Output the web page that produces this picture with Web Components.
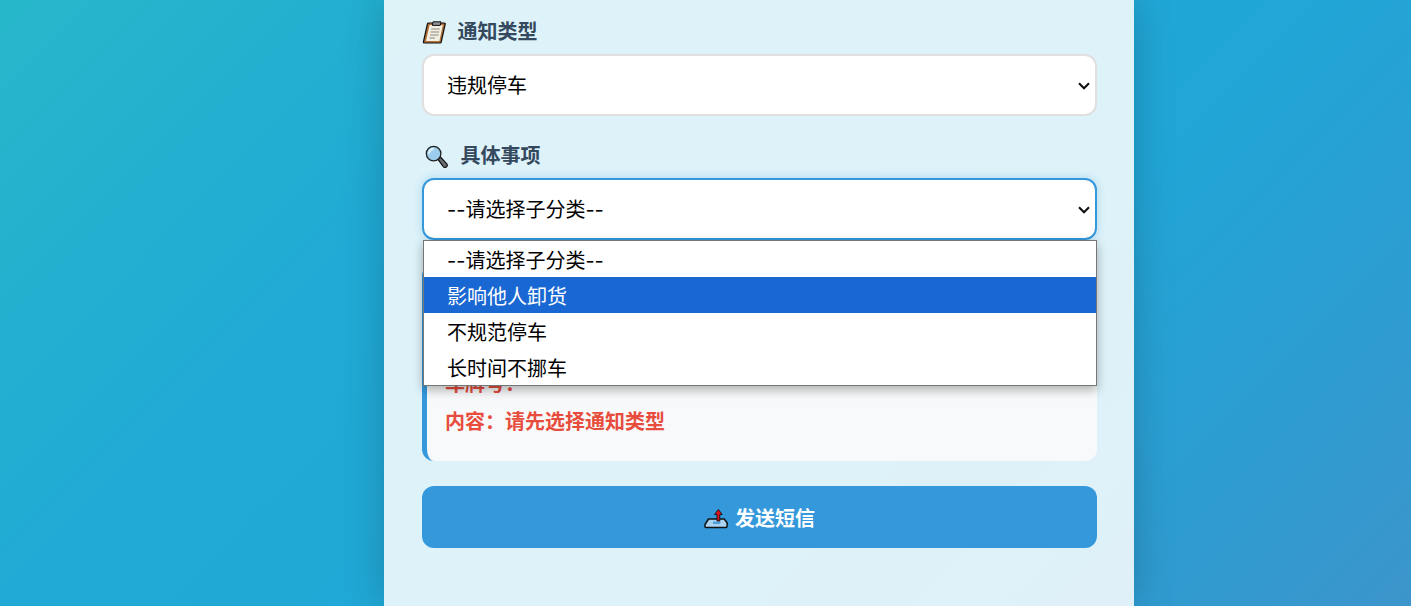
<!DOCTYPE html>
<html lang="zh-CN">
<head>
<meta charset="utf-8">
<title>短信通知</title>
<style>
  html, body { margin: 0; height: 606px; overflow: hidden; }
  body {
    background: linear-gradient(135deg, #27b7ca 0%, #20aad5 30%, #21a6d7 65%, #2e9cd1 85%, #3c95cb 100%);
    font-family: "Liberation Sans", "Noto Sans CJK SC", sans-serif;
  }
</style>
</head>
<body>
<notify-card>
  <form-field label="通知类型" gap="11.5">
    <svg slot="icon" width="24" height="24" viewBox="0 0 24 24">
      <path d="M6.4 3h16a.8.8 0 0 1 .8 1l-4 18.2a1 1 0 0 1-1 .8h-16a.8.8 0 0 1-.8-1l4-18.2a1 1 0 0 1 1-.8z" fill="#b06f38" stroke="#111" stroke-width="1.2" stroke-linejoin="round"/>
      <path d="M7.6 5h13.2L17.4 21H4z" fill="#f3efe2"/>
      <path d="M11 1.8h8l-.7 3.6h-8z" fill="#8d9094" stroke="#111" stroke-width="1"/>
      <path d="M9.2 9h8.6M8.6 12h8.6M8 15h8.6M7.4 18h5.6" stroke="#8a8a82" stroke-width="1.2"/>
    </svg>
    <select-box value="违规停车"></select-box>
  </form-field>
  <form-field label="具体事项" gap="12.5" open>
    <svg slot="icon" style="margin-left:2px" width="24" height="24" viewBox="0 0 24 24">
      <path d="M14 15.4l2.4-2.4 6.2 6.6a2.3 2.3 0 0 1-.1 3.2 2.3 2.3 0 0 1-3.2-.1z" fill="#6a6f74" stroke="#111" stroke-width="1.2" stroke-linejoin="round"/>
      <circle cx="9.6" cy="9.6" r="7.3" fill="#9ccdec" stroke="#222" stroke-width="1.3"/>
      <path d="M5 9a5 5 0 0 1 4-4" fill="none" stroke="#e3f3fc" stroke-width="1.8" stroke-linecap="round"/>
    </svg>
    <select-box value="--请选择子分类--" focused></select-box>
    <option-popup>
      <popup-row>--请选择子分类--</popup-row>
      <popup-row selected>影响他人卸货</popup-row>
      <popup-row>不规范停车</popup-row>
      <popup-row>长时间不挪车</popup-row>
    </option-popup>
  </form-field>
  <sms-preview>
    <p>车牌号&#xFF1A;</p>
    <p>内容&#xFF1A;请先选择通知类型</p>
  </sms-preview>
  <send-button>
    <svg slot="icon" width="24" height="24" viewBox="0 0 24 24">
      <path d="M4.5 14L1 19.5v2c0 .6.4 1 1 1h20c.6 0 1-.4 1-1l.2-3.5-3-4z" fill="#a9d3f0" stroke="#111" stroke-width="1.5" stroke-linejoin="round"/>
      <path d="M9 16.5h8l-1 2.5H9z" fill="#4f9fdb"/>
      <path d="M13 16V9.5h-2.4L14.4 4.4l3.8 5.1h-2.4V16z" fill="#e1141f" stroke="#111" stroke-width="0.9" stroke-linejoin="round"/>
    </svg>
    发送短信
  </send-button>
</notify-card>

<script>
class NotifyCard extends HTMLElement {
  constructor() {
    super();
    this.attachShadow({ mode: "open" }).innerHTML = `
      <style>
        :host {
          display: flex;
          flex-direction: column;
          box-sizing: border-box;
          width: 750px;
          height: 606px;
          margin-left: 384px;
          padding: 20px 37px 0 38px;
          background: rgba(255, 255, 255, 0.85);
          box-shadow: 0 0 40px rgba(0, 0, 0, 0.2);
        }
      </style>
      <slot></slot>`;
  }
}

class FormField extends HTMLElement {
  constructor() {
    super();
    this.attachShadow({ mode: "open" }).innerHTML = `
      <style>
        :host {
          display: block;
          position: relative;
          margin-bottom: 24px;
        }
        :host(:first-child) { margin-bottom: 28px; }
        label {
          display: flex;
          align-items: center;
          height: 24px;
          margin-bottom: 10px;
          font: bold 20px/24px "Liberation Sans", "Noto Sans CJK SC", sans-serif;
          color: #34495e;
        }
        ::slotted(svg) { flex: none; }
      </style>
      <label><slot name="icon"></slot><span></span></label>
      <slot></slot>`;
  }

  connectedCallback() {
    const span = this.shadowRoot.querySelector("span");
    span.textContent = this.getAttribute("label");
    span.style.marginLeft = this.getAttribute("gap") + "px";
  }
}

class SelectBox extends HTMLElement {
  constructor() {
    super();
    this.attachShadow({ mode: "open" }).innerHTML = `
      <style>
        :host { display: block; position: relative; }
        select {
          display: block;
          box-sizing: border-box;
          width: 100%;
          height: 62px;
          padding: 1px 40px 0 23px;
          appearance: none;
          background: #fff;
          border: 2px solid #e0e0e0;
          border-radius: 12px;
          outline: none;
          color: #000;
          font: 20px Inter, "Noto Sans CJK SC", sans-serif;
        }
        :host([focused]) select {
          border-color: #3498db;
          box-shadow: 0 0 8px rgba(52, 152, 219, 0.3);
        }
        svg {
          position: absolute;
          right: 7px;
          top: 28px;
          pointer-events: none;
        }
      </style>
      <select><option></option></select>
      <svg width="12" height="8" viewBox="0 0 12 8">
        <path d="M1 1.2l5 5 5-5" fill="none" stroke="#111" stroke-width="2.1"/>
      </svg>`;
  }

  connectedCallback() {
    this.shadowRoot.querySelector("option").textContent =
      this.getAttribute("value");
  }
}

class OptionPopup extends HTMLElement {
  constructor() {
    super();
    this.attachShadow({ mode: "open" }).innerHTML = `
      <style>
        :host {
          display: block;
          position: absolute;
          z-index: 5;
          left: 1px;
          right: 0;
          top: 96px;
          box-sizing: border-box;
          background: #fff;
          border: 1px solid #767676;
          box-shadow: 0 4px 10px rgba(0, 0, 0, 0.3);
        }
      </style>
      <slot></slot>`;
  }
}

class PopupRow extends HTMLElement {
  constructor() {
    super();
    this.attachShadow({ mode: "open" }).innerHTML = `
      <style>
        :host {
          display: block;
          height: 34px;
          padding: 2px 23px 0;
          color: #000;
          font: 20px/36px Inter, "Noto Sans CJK SC", sans-serif;
          white-space: nowrap;
        }
        :host([selected]) {
          background: #1967d2;
          color: #fff;
        }
      </style>
      <slot></slot>`;
  }
}

class SmsPreview extends HTMLElement {
  constructor() {
    super();
    this.attachShadow({ mode: "open" }).innerHTML = `
      <style>
        :host {
          display: flex;
          flex-direction: column;
          justify-content: flex-end;
          box-sizing: border-box;
          height: 197px;
          padding: 0 20px 26px 18px;
          background: #f8f9fa;
          border-left: 5px solid #3498db;
          border-radius: 12px;
          color: #e74c3c;
          font: bold 20px/26px "Liberation Sans", "Noto Sans CJK SC", sans-serif;
        }
        ::slotted(p) { margin: 12px 0 0; }
      </style>
      <slot></slot>`;
  }
}

class SendButton extends HTMLElement {
  constructor() {
    super();
    this.attachShadow({ mode: "open" }).innerHTML = `
      <style>
        :host {
          display: block;
          margin-top: 25px;
        }
        button {
          display: flex;
          align-items: center;
          justify-content: center;
          gap: 7px;
          width: 100%;
          height: 62px;
          padding: 0;
          background: #3498db;
          border: 0;
          border-radius: 12px;
          color: #fff;
          font: bold 20px "Liberation Sans", "Noto Sans CJK SC", sans-serif;
        }
      </style>
      <button type="button"><slot name="icon"></slot><slot></slot></button>`;
  }
}

customElements.define("notify-card", NotifyCard);
customElements.define("form-field", FormField);
customElements.define("select-box", SelectBox);
customElements.define("option-popup", OptionPopup);
customElements.define("popup-row", PopupRow);
customElements.define("sms-preview", SmsPreview);
customElements.define("send-button", SendButton);
</script>
</body>
</html>
